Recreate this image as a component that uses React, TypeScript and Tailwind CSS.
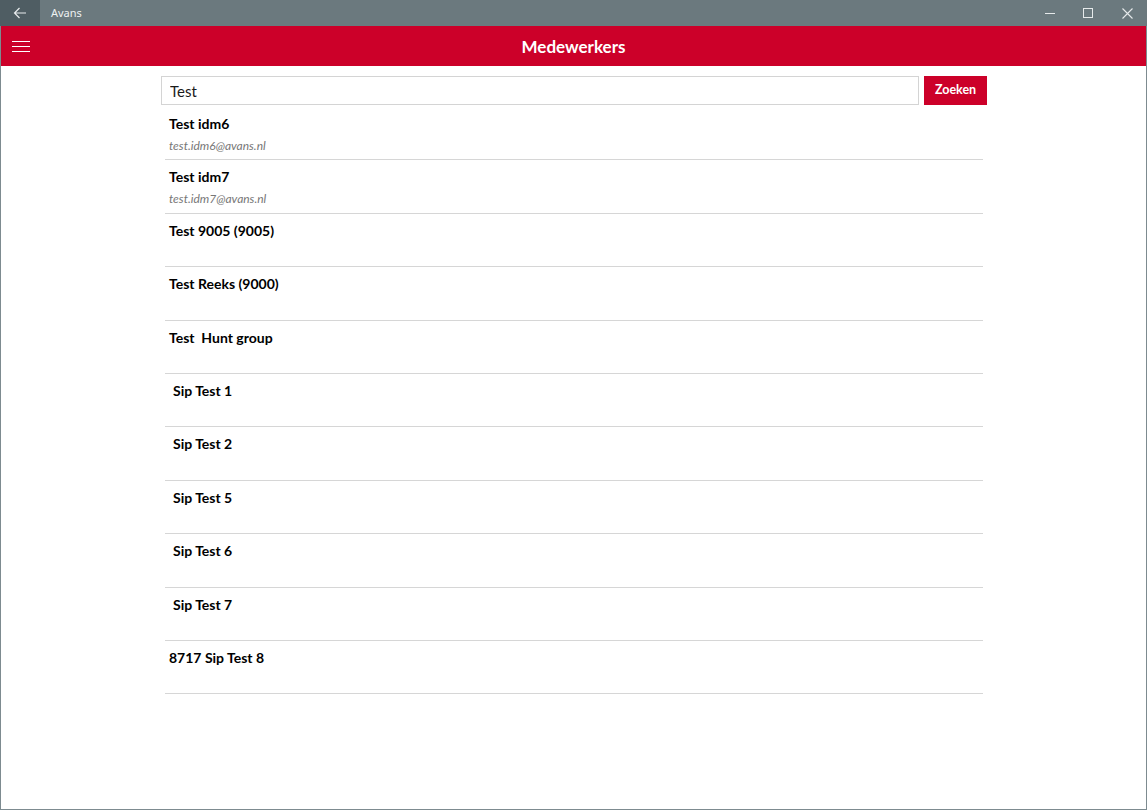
import { useState } from 'react';

const people = [
  { name: 'Test idm6', email: 'test.idm6@avans.nl' },
  { name: 'Test idm7', email: 'test.idm7@avans.nl' },
  { name: 'Test 9005 (9005)' },
  { name: 'Test Reeks (9000)' },
  { name: 'Test\u00a0 Hunt group' },
  { name: 'Sip Test 1', indent: true },
  { name: 'Sip Test 2', indent: true },
  { name: 'Sip Test 5', indent: true },
  { name: 'Sip Test 6', indent: true },
  { name: 'Sip Test 7', indent: true },
  { name: '8717 Sip Test 8' },
];

export default function App() {
  const [query, setQuery] = useState('Test');

  return (
    <div className="w-[1147px] h-[810px] flex flex-col bg-white font-['Lato','Noto_Sans',sans-serif] overflow-hidden">
      {/* Title bar */}
      <div className="h-[26px] flex items-center bg-[#6b797e] text-white shrink-0">
        <div className="w-[40px] h-full flex items-center justify-center bg-[#4f5d63]">
          <svg width="14" height="12" viewBox="0 0 14 12" fill="none" stroke="#e8ecee" strokeWidth="1.2">
            <path d="M13 6H1.5M6.5 1L1.5 6l5 5" />
          </svg>
        </div>
        <span className="ml-[11px] text-[11px] text-[#eef1f2] font-['Noto_Sans',sans-serif]">Avans</span>
        <div className="ml-auto flex h-full items-center">
          <div className="w-[38px] h-full flex items-center justify-center">
            <svg width="10" height="10" viewBox="0 0 10 10" stroke="#e6eaeb" strokeWidth="1"><path d="M0 5.5h10" /></svg>
          </div>
          <div className="w-[38px] h-full flex items-center justify-center">
            <svg width="10" height="10" viewBox="0 0 10 10" fill="none" stroke="#e6eaeb" strokeWidth="1"><rect x="0.5" y="0.5" width="9" height="9" /></svg>
          </div>
          <div className="w-[40px] h-full flex items-center justify-center">
            <svg width="11" height="11" viewBox="0 0 11 11" stroke="#e6eaeb" strokeWidth="1.1"><path d="M0.5 0.5l10 10M10.5 0.5l-10 10" /></svg>
          </div>
        </div>
      </div>

      <div className="flex-1 flex flex-col border-x border-b border-[#7d8b90]">
        {/* Header */}
        <div className="h-[40px] bg-[#cc0029] flex items-center relative shrink-0">
          <button className="absolute left-[11px] top-[15px] flex flex-col gap-[4px]">
            <span className="block w-[18px] h-[1px] bg-white" />
            <span className="block w-[18px] h-[1px] bg-white" />
            <span className="block w-[18px] h-[1px] bg-white" />
          </button>
          <h1 className="flex-1 text-center text-white font-bold text-[17px] mt-[2px]">Medewerkers</h1>
        </div>

        {/* Content */}
        <div className="w-[826px] ml-[160px] mt-[10px] flex flex-col">
          <div className="flex gap-[5px] h-[29px]">
            <input
              value={query}
              onChange={(e) => setQuery(e.target.value)}
              className="w-[759px] h-full border border-[#d4d4d4] px-[8px] text-[15px] text-[#1a1a1a] outline-none"
            />
            <button className="w-[63px] h-full bg-[#cc0029] text-white font-bold text-[12.5px]">Zoeken</button>
          </div>

          <ul className="mx-[4px] w-[818px] mt-[2px]">
            {people.map((p) => (
              <li key={p.name} className="h-[53.4px] border-b border-[#d6d6d6] pt-[7px]">
                <div className={`font-bold text-[14px] text-black leading-[20px] ${p.indent ? 'pl-[8px]' : 'pl-[4px]'}`}>
                  {p.name}
                </div>
                {p.email && (
                  <div className="italic text-[12px] text-[#777] leading-[18px] mt-[3px] pl-[4px]">{p.email}</div>
                )}
              </li>
            ))}
          </ul>
        </div>
      </div>
    </div>
  );
}
